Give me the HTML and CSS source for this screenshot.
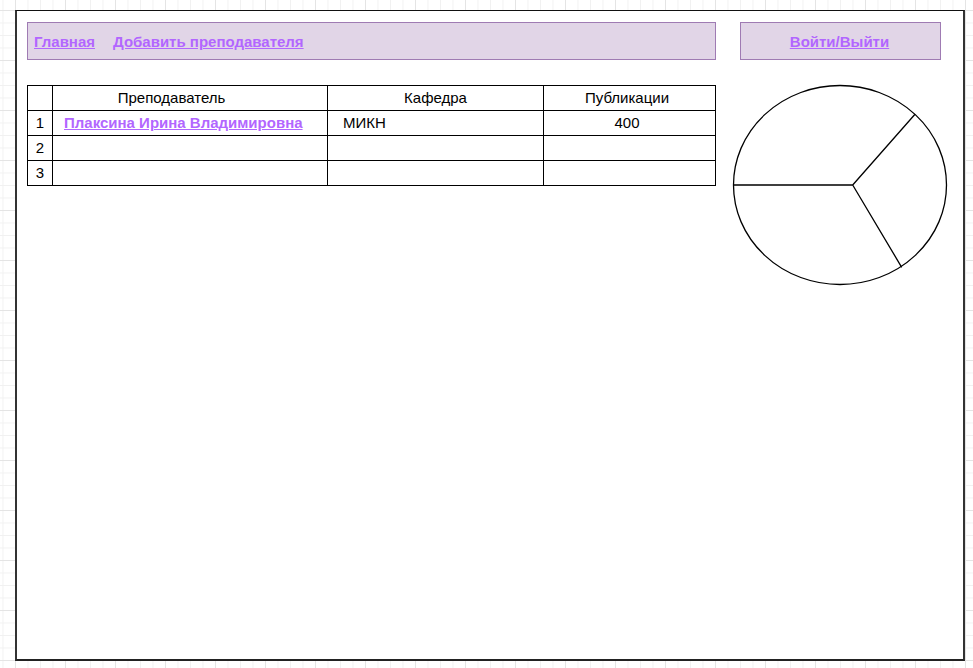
FILE: index.html
```html
<!DOCTYPE html>
<html lang="ru">
<head>
<meta charset="utf-8">
<title>Преподаватели</title>
<link rel="stylesheet" href="styles.css">
</head>
<body>
<div class="frame">
  <div class="layout">
    <div class="left">
      <nav class="nav">
        <a href="#" class="link">Главная</a>
        <a href="#" class="link">Добавить преподавателя</a>
      </nav>
      <table class="teachers">
        <colgroup>
          <col class="c-num">
          <col class="c-name">
          <col class="c-dep">
          <col class="c-pub">
        </colgroup>
        <thead>
          <tr>
            <th></th>
            <th class="h-name">Преподаватель</th>
            <th>Кафедра</th>
            <th class="h-pub">Публикации</th>
          </tr>
        </thead>
        <tbody>
          <tr>
            <td class="num">1</td>
            <td class="name"><a href="#" class="link">Плаксина Ирина Владимировна</a></td>
            <td class="dep">МИКН</td>
            <td class="pub">400</td>
          </tr>
          <tr>
            <td class="num">2</td>
            <td></td>
            <td></td>
            <td></td>
          </tr>
          <tr>
            <td class="num">3</td>
            <td></td>
            <td></td>
            <td></td>
          </tr>
        </tbody>
      </table>
    </div>
    <div class="right">
      <div class="login">
        <a href="#" class="link">Войти/Выйти</a>
      </div>
      <svg class="pie" width="214" height="202" viewBox="0 0 214 202" aria-hidden="true">
        <ellipse cx="107" cy="100" rx="106.5" ry="99.5" fill="none" stroke="#000" stroke-width="1.3"/>
        <path d="M119.7 100 L0.5 100 M119.7 100 L182 29.3 M119.7 100 L168.7 182.3" fill="none" stroke="#000" stroke-width="1.3"/>
      </svg>
    </div>
  </div>
</div>
</body>
</html>
```

FILE: styles.css
```css
html, body {
  margin: 0;
  height: 100%;
}

body {
  padding: 10px 0 0 15px;
  box-sizing: border-box;
  font-family: "Liberation Sans", Arial, sans-serif;
  font-size: 15px;
  color: #000;
  background-color: #fff;
  background-image:
    linear-gradient(#e4e4e4 1px, transparent 1px),
    linear-gradient(90deg, #e4e4e4 1px, transparent 1px),
    linear-gradient(#f1f1f1 1px, transparent 1px),
    linear-gradient(90deg, #f1f1f1 1px, transparent 1px);
  background-size: 50px 50px, 50px 50px, 12.5px 12.5px, 12.5px 12.5px;
  background-position: 15px 10px, 15px 10px, 15px 10px, 15px 10px;
}

.frame {
  width: 950px;
  height: 651px;
  box-sizing: border-box;
  background: #fff;
  border-top: 1px solid #111;
  border-bottom: 2px solid #222;
  border-left: 2px solid #333;
  border-right: 2px solid #333;
  padding: 11px 0 0 10px;
}

.layout {
  display: grid;
  grid-template-columns: 689px 214px;
  column-gap: 17px;
  align-items: start;
}

.left {
  display: flex;
  flex-direction: column;
  gap: 25px;
}

.right {
  display: flex;
  flex-direction: column;
  gap: 25px;
}

.link {
  color: #b266ff;
  font-weight: bold;
  text-decoration: underline;
}

.nav {
  height: 38px;
  box-sizing: border-box;
  background: #e1d5e7;
  border: 1.5px solid #9f7bb3;
  display: flex;
  align-items: center;
  gap: 18px;
  padding: 0 0 0 6px;
}

.login {
  margin-left: 7px;
  width: 201px;
  height: 38px;
  box-sizing: border-box;
  background: #e1d5e7;
  border: 1.5px solid #9f7bb3;
  display: flex;
  align-items: center;
  justify-content: center;
  padding-right: 2px;
}

.pie {
  display: block;
  overflow: visible;
}

.teachers {
  width: 688px;
  table-layout: fixed;
  border-collapse: collapse;
}

.c-num { width: 25px; }
.c-name { width: 275px; }
.c-dep { width: 216px; }
.c-pub { width: 172px; }

.teachers th,
.teachers td {
  border: 1px solid #000;
  height: 24px;
  padding: 0;
  font-weight: normal;
  line-height: 18px;
  vertical-align: middle;
  white-space: nowrap;
}

.teachers th {
  text-align: center;
}

.teachers .h-name {
  padding-right: 37px;
}

.teachers .h-pub {
  padding-right: 5px;
}

.teachers .num {
  text-align: center;
}

.teachers .name {
  padding-left: 11px;
}

.teachers .dep {
  padding-left: 15px;
}

.teachers .pub {
  text-align: center;
  padding-right: 5px;
}
```
